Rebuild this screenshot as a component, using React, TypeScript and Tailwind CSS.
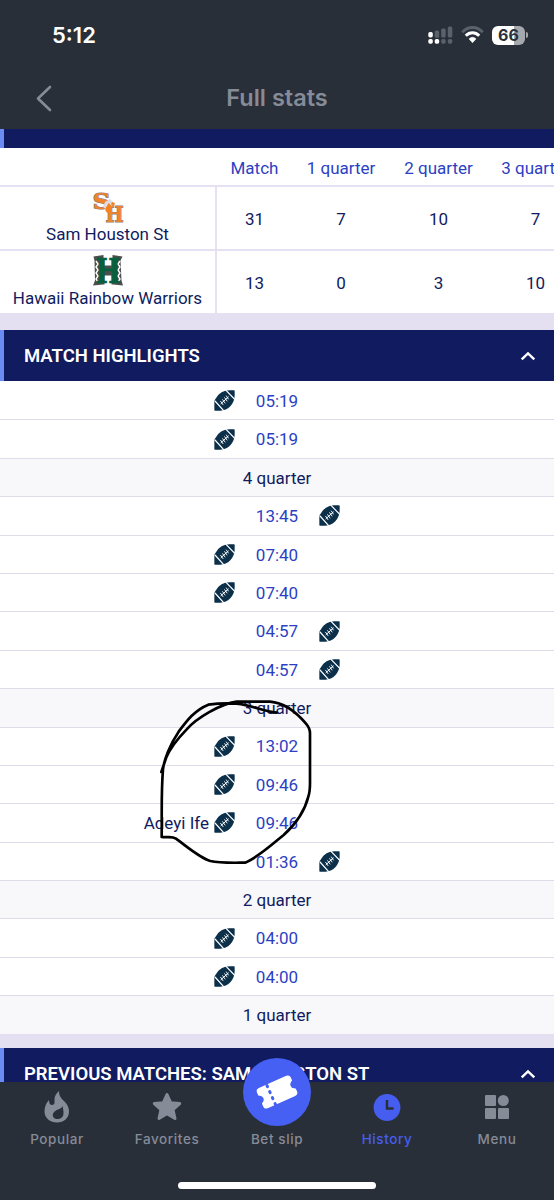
import type { ReactNode } from "react";
import clsx from "clsx";

interface Highlight {
  type: "goal";
  time: string;
  side: "home" | "away";
  player?: string;
}

interface Period {
  type: "period";
  label: string;
}

const highlights: (Highlight | Period)[] = [
  { type: "goal", time: "05:19", side: "home" },
  { type: "goal", time: "05:19", side: "home" },
  { type: "period", label: "4 quarter" },
  { type: "goal", time: "13:45", side: "away" },
  { type: "goal", time: "07:40", side: "home" },
  { type: "goal", time: "07:40", side: "home" },
  { type: "goal", time: "04:57", side: "away" },
  { type: "goal", time: "04:57", side: "away" },
  { type: "period", label: "3 quarter" },
  { type: "goal", time: "13:02", side: "home" },
  { type: "goal", time: "09:46", side: "home" },
  { type: "goal", time: "09:46", side: "home", player: "Adeyi Ife" },
  { type: "goal", time: "01:36", side: "away" },
  { type: "period", label: "2 quarter" },
  { type: "goal", time: "04:00", side: "home" },
  { type: "goal", time: "04:00", side: "home" },
  { type: "period", label: "1 quarter" },
];

const columns = ["Match", "1 quarter", "2 quarter", "3 quarter"];

function StatusBar() {
  return (
    <div className="flex h-[70px] items-center justify-between pl-[52px] pr-[26px]">
      <span className="text-[22px] font-semibold leading-none text-white">5:12</span>
      <div className="flex items-center gap-2">
        <svg width="25" height="18" viewBox="0 0 25 18">
          <g fill="#5b616a">
            <rect x="6.7" y="4.5" width="4.5" height="7.2" rx="1.5" />
            <rect x="13.2" y="2.6" width="4.5" height="9" rx="1.5" />
            <rect x="19.8" y="0.5" width="4.5" height="11" rx="1.5" />
            <rect x="13.2" y="13" width="4.5" height="4.7" rx="1.7" />
            <rect x="19.8" y="13" width="4.5" height="4.7" rx="1.7" />
          </g>
          <g fill="#fff">
            <rect x="0.3" y="6" width="4.5" height="5.5" rx="1.7" />
            <rect x="0.3" y="13" width="4.5" height="4.7" rx="1.7" />
            <rect x="6.7" y="13" width="4.5" height="4.7" rx="1.7" />
          </g>
        </svg>
        <svg width="23" height="18" viewBox="0 0 23 18" fill="none">
          <path d="M1.3 6.2C7 0 16 0 21.7 6.2" stroke="#5b616a" strokeWidth="3" />
          <path d="M4.8 9.7c3.8-4 9.6-4 13.4 0" stroke="#fff" strokeWidth="3" />
          <path d="M8 12.9c2-2.1 5-2.1 7 0l-3.5 3.9z" fill="#fff" stroke="#fff" strokeWidth="0.5" />
        </svg>
        <div className="flex items-center gap-px">
          <div className="flex h-[19px] w-[33px] items-center justify-center rounded-[6px] bg-[linear-gradient(90deg,#fff_66%,#a5a8ac_66%)] text-[16px] font-bold leading-none text-[#292f38]">
            66
          </div>
          <div className="h-[6px] w-[2px] rounded-r-full bg-[#a5a8ac]" />
        </div>
      </div>
    </div>
  );
}

function TitleBar() {
  return (
    <div className="grid h-[57px] grid-cols-[1fr_auto_1fr] items-center">
      <svg className="ml-[35px]" width="18" height="28" viewBox="0 0 18 28" fill="none">
        <path d="M15 2 3 13.500l12 11.500" stroke="#868b98" strokeWidth="2.6" strokeLinecap="round" strokeLinejoin="round" />
      </svg>
      <h1 className="pb-px text-[23.5px] font-semibold leading-none text-[#868b98]">Full stats</h1>
    </div>
  );
}

function SamHoustonLogo() {
  return (
    <svg className="overflow-visible" width="32" height="32" viewBox="0 0 32 32">
      <g fontFamily="'DejaVu Serif', serif" fontWeight="700" fill="#f0842c" stroke="#8e7c78" strokeWidth="1.200" paintOrder="stroke">
        <text x="0.5" y="18" fontSize="22" textLength="18" lengthAdjust="spacingAndGlyphs">S</text>
        <text x="13.500" y="30.500" fontSize="23" textLength="18" lengthAdjust="spacingAndGlyphs">H</text>
      </g>
      <path d="M13 11l5-3 3 3-2 5-4 3-4-3z" fill="#dcdce3" />
      <path d="M16.500 12c2.500 2 4.500 4 3 7.500-1 3-5 3.500-6 0-.5-3 2-4.500 3-7.500z" fill="#f58220" />
      <path d="M20 11l3 1-1 3.500-3-2z" fill="#f0842c" />
    </svg>
  );
}

function HawaiiLogo() {
  return (
    <svg className="overflow-visible" width="32" height="32" viewBox="0 0 32 32">
      <path d="M1.5 1.5 11.5 0v3h9V0l10 1.5-2 4 1 20 1.5 5-10-1h-10L1 30.500l2-5-.5-20z" fill="#4b4e4d" />
      <path d="M12.500 0h7v10.500h-7zM12.500 20.500h7v11.500h-7z" fill="#fff" />
      <path d="M4 6l2 3-2 3 2 3-2 3 2 3-2 3 2 3M28 6l-2 3 2 3-2 3 2 3-2 3 2 3-2 3" stroke="#fff" strokeWidth="1.4" fill="none" />
      <text x="3.500" y="27.800" fontFamily="'DejaVu Serif', serif" fontWeight="700" fontSize="33" textLength="25" lengthAdjust="spacingAndGlyphs" fill="#08603f" stroke="#08603f" strokeWidth="0.6">
        H
      </text>
    </svg>
  );
}

function Football() {
  return (
    <svg className="shrink-0" width="21" height="21" viewBox="0 0 63 63">
      <path d="M1 33c0-2 4-6 5-8C14 9 30 1 46 1h14q2 0 2 2v14c0 10-4 22-13 32-9 9-18 13-30 13H3q-2 0-2-2z" fill="#0c2f4a" />
      <g stroke="#fff" strokeLinecap="round" fill="none">
        <path d="M3 33l26 29M36 1l26 27" strokeWidth="3.500" />
        <path d="M21 41l22-20" strokeWidth="3" />
        <path d="M20 34l7 10M26 29l7 10M32 23l7 10M37 18l6 9" strokeWidth="2.800" />
      </g>
    </svg>
  );
}

function ChevronUp() {
  return (
    <svg width="16" height="10" viewBox="0 0 16 10" fill="none">
      <path d="m1.700 8.300 6.300-6 6.300 6" stroke="#fff" strokeWidth="2.400" />
    </svg>
  );
}

function SectionHeader({ title }: { title: string }) {
  return (
    <div className="flex h-[51px] shrink-0 items-center justify-between border-l-4 border-[#6c8cf5] bg-[#101b60] pl-5 pr-[18px]">
      <h2 className="pt-0.5 text-[18.5px] font-semibold text-white">{title}</h2>
      <ChevronUp />
    </div>
  );
}

function ScoreRow({ logo, name, scores }: { logo: ReactNode; name: string; scores: number[] }) {
  return (
    <div className="grid h-16 grid-cols-[217px_75px_98px_97px_97px] border-b-2 border-[#e5e0f2]">
      <div className="flex flex-col items-center border-r-2 border-[#e5e0f2] pt-1">
        {logo}
        <span className="-mt-px whitespace-nowrap text-[17px] leading-6">{name}</span>
      </div>
      {scores.map((score, i) => (
        <span key={i} className="self-center pt-[3px] text-center text-[17px]">
          {score}
        </span>
      ))}
    </div>
  );
}

function HighlightRow({ item }: { item: Highlight }) {
  return (
    <>
      <div className="flex items-center justify-end gap-[5px]">
        {item.player && <span className="pt-0.5">{item.player}</span>}
        {item.side === "home" && <Football />}
      </div>
      <span className="pt-0.5 text-center text-[#2c3fc4]">{item.time}</span>
      <div className="flex items-center">{item.side === "away" && <Football />}</div>
    </>
  );
}

// Freehand loop drawn over the third quarter
function MarkerLoop() {
  return (
    <svg className="pointer-events-none absolute left-[140px] top-[299px]" width="200" height="210" viewBox="0 0 600 630" fill="none">
      <path
        d="M410 98C365 92 340 77 290 71C250 69 220 72 205 74C165 90 142 120 116 155C90 193 72 240 69 268C63 340 66 410 65 471C85 473 96 468 108 476C145 503 180 534 211 543C240 550 285 548 315 548C350 535 390 498 431 465C470 430 495 390 505 350Q510 335 510 310L510 160Q510 145 498 131C470 98 430 68 390 65L290 65C240 72 170 114 140 148C115 174 92 200 79 232L64 276"
        stroke="#000"
        strokeWidth="8"
        strokeLinecap="round"
        strokeLinejoin="round"
      />
    </svg>
  );
}

function NavItem({ label, icon, active }: { label: string; icon?: ReactNode; active?: boolean }) {
  return (
    <div className={clsx("flex flex-col items-center", active ? "text-[#465ef0]" : "text-[#868b98]")}>
      <div className="flex h-[49px] items-center justify-center">{icon}</div>
      <span className="text-[13.500px] font-medium leading-4 tracking-[0.6px]">{label}</span>
    </div>
  );
}

function BottomNav() {
  return (
    <nav className="relative h-[118px] shrink-0 bg-[#292f38] font-[Inter,sans-serif]">
      <div className="grid grid-cols-5 px-0.5">
        <NavItem
          label="Popular"
          icon={
            <svg width="26" height="32" viewBox="0 0 26 32" fill="currentColor">
              <path fillRule="evenodd" d="M15 0c0 5 2 7 5 10 3 3 5 6 5 10.500C25 27 20 31.500 13 31.500S.5 27 .5 20.500C.5 16 2 12 5 9c0 3 1 5 3 5 3 0 2.500-3 2.500-6 0-3 2-6 4.500-8zm3.500 15c-1 3-4 3-6.500 4.500-2.500 1.500-4 3.500-3 6 .8 2 2.500 2.500 4.500 2.500 4 0 6-2.500 6-6 0-3-.5-5-1-7z" />
            </svg>
          }
        />
        <NavItem
          label="Favorites"
          icon={
            <svg width="30" height="30" viewBox="0 0 30 30">
              <path d="m15 2.500 3.700 8.200 9 .9-6.700 6 2 8.900-8-4.700-8 4.700 2-8.900-6.700-6 9-.9z" fill="currentColor" stroke="currentColor" strokeWidth="3" strokeLinejoin="round" />
            </svg>
          }
        />
        <NavItem label="Bet slip" />
        <NavItem
          label="History"
          active
          icon={
            <svg width="28" height="28" viewBox="0 0 28 28">
              <circle cx="14" cy="14.500" r="13.400" fill="currentColor" />
              <path d="M14 7v8.500h6.500" fill="none" stroke="#292f38" strokeWidth="2.500" />
            </svg>
          }
        />
        <NavItem
          label="Menu"
          icon={
            <svg className="mt-px" width="24" height="24" viewBox="0 0 24 24" fill="currentColor">
              <rect width="11" height="11" rx="1" />
              <circle cx="18.300" cy="5.500" r="5.500" />
              <rect y="13" width="11" height="11" rx="1" />
              <rect x="13" y="13" width="11" height="11" rx="1" />
            </svg>
          }
        />
      </div>
      <div className="absolute -top-6 left-[243px] flex size-[68px] items-center justify-center rounded-full bg-[#4560f2]">
        <svg width="42" height="36" viewBox="0 0 42 36">
          <g transform="rotate(-24 21 18)">
            <path d="M6 7h30a3.500 3.500 0 0 1 3.500 3.500V13c0 1-1 1-1.500 1.500a4 4 0 0 0 0 7c.5.5 1.500.5 1.500 1.500v2.500A3.500 3.500 0 0 1 36 29H6a3.500 3.500 0 0 1-3.500-3.500V23c0-1 1-1 1.500-1.500a4 4 0 0 0 0-7C3.500 14 2.500 14 2.500 13v-2.500A3.500 3.500 0 0 1 6 7z" fill="#fff" />
            <path d="M14.500 8v22" stroke="#4560f2" strokeWidth="3" strokeLinecap="round" strokeDasharray="1.200 5.400" />
          </g>
        </svg>
      </div>
      <div className="absolute bottom-[11px] left-[178px] h-[7px] w-[198px] rounded-full bg-white" />
    </nav>
  );
}

export default function App() {
  return (
    <div className="flex h-[1200px] w-[554px] flex-col overflow-hidden bg-white font-[Roboto,sans-serif] text-[#101b60]">
      <header className="h-[129px] shrink-0 bg-[#292f38] font-[Inter,sans-serif]">
        <StatusBar />
        <TitleBar />
      </header>

      <main className="flex h-[953px] flex-col overflow-hidden">
        <div className="h-[19px] shrink-0 border-l-4 border-[#6c8cf5] bg-[#101b60]" />

        <section className="h-[166px] shrink-0 overflow-hidden">
          <div className="grid h-[39px] grid-cols-[217px_75px_98px_97px_97px] items-center border-b-2 border-[#e5e0f2] pt-[5px] text-[17px] text-[#2c3fc4]">
            <span />
            {columns.map((column) => (
              <span key={column} className="whitespace-nowrap text-center">
                {column}
              </span>
            ))}
          </div>
          <ScoreRow logo={<SamHoustonLogo />} name="Sam Houston St" scores={[31, 7, 10, 7]} />
          <ScoreRow logo={<HawaiiLogo />} name="Hawaii Rainbow Warriors" scores={[13, 0, 3, 10]} />
        </section>

        <div className="h-4 shrink-0 bg-[#e5dff2]" />
        <SectionHeader title="MATCH HIGHLIGHTS" />
        <div className="relative h-[653px] shrink-0 overflow-hidden pt-px text-[17px]">
          {highlights.map((item, i) =>
            item.type === "period" ? (
              <div key={i} className="flex h-[38.4px] items-center justify-center border-b border-[#dddce8] bg-[#f8f8fb] pt-0.5">
                {item.label}
              </div>
            ) : (
              <div key={i} className="grid h-[38.4px] grid-cols-[235px_84px_235px] items-center border-b border-[#dddce8]">
                <HighlightRow item={item} />
              </div>
            ),
          )}
          <MarkerLoop />
        </div>

        <div className="h-[14px] shrink-0 bg-[#e5dff2]" />
        <SectionHeader title="PREVIOUS MATCHES: SAM HOUSTON ST" />
      </main>

      <BottomNav />
    </div>
  );
}
